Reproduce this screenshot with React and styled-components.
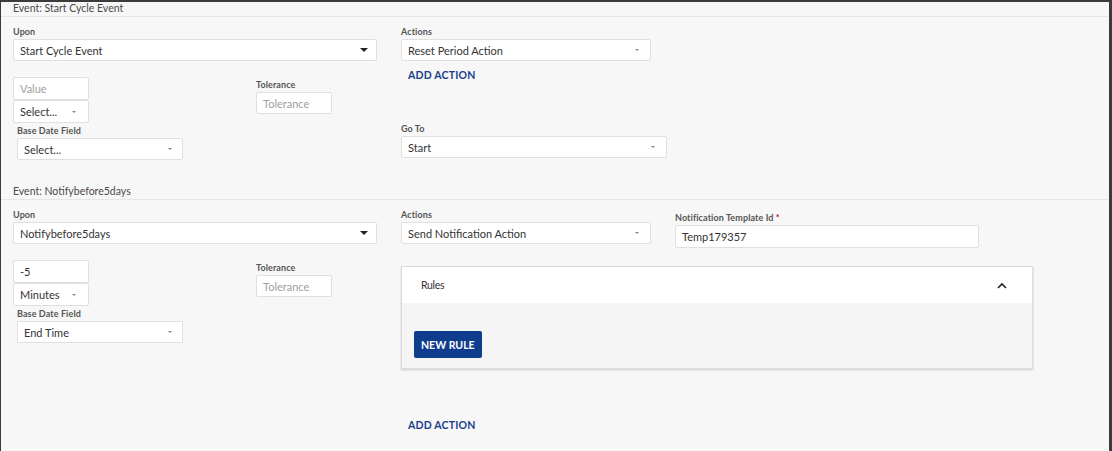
import styled, { createGlobalStyle } from 'styled-components';

const GlobalStyle = createGlobalStyle`
  html, body {
    margin: 0;
    padding: 0;
    background: #3b3b3b;
    font-family: Lato, "Liberation Sans", sans-serif;
  }
  * { box-sizing: border-box; }
`;

const Page = styled.div`
  margin: 2px 3px 0 1px;
  height: 449px;
  background: #f7f7f7;
  overflow: hidden;
`;

// the view is scrolled a little, the first header sits under the top edge
const Scroller = styled.div`
  margin-top: -6px;
`;

const Section = styled.section``;

const SectionHeader = styled.div`
  height: 21px;
  padding: 3px 0 0 12px;
  line-height: 18px;
  font-size: 10.5px;
  color: #4a4a4a;
  border-bottom: 1px solid #e6e6e6;
`;

const SectionBody = styled.div`
  display: flex;
  padding: 8px 0 ${p => p.$bottom || 19}px 12px;
  gap: 24px;
`;

const LeftCol = styled.div`
  width: 364px;
  display: flex;
  flex-direction: column;
`;

const RightCol = styled.div`
  display: flex;
  flex-direction: column;
  align-items: flex-start;
`;

const Field = styled.div`
  display: flex;
  flex-direction: column;
  width: ${p => p.$w ? `${p.$w}px` : 'auto'};
  margin-top: ${p => p.$mt || 0}px;
  margin-left: ${p => p.$ml || 0}px;
`;

const Label = styled.label`
  height: 14px;
  line-height: 14px;
  font-size: 9px;
  font-weight: 700;
  color: #555;
  letter-spacing: 0.1px;
`;

const Req = styled.span`
  color: #d0021b;
`;

const Box = styled.div`
  height: ${p => p.$h || 22}px;
  background: #fff;
  border: 1px solid #e0e0e0;
  border-radius: 2px;
  display: flex;
  align-items: center;
  padding: 0 ${p => p.$pr || 10}px 0 6px;
  font-size: 11px;
  color: ${p => p.$placeholder ? '#a0a0a0' : '#333'};
`;

const BoxText = styled.span`
  flex: 1;
  white-space: nowrap;
`;

const SolidCaret = styled.span`
  width: 0;
  height: 0;
  border-left: 4px solid transparent;
  border-right: 4px solid transparent;
  border-top: 4px solid #222;
`;

const SmallCaret = styled.span`
  width: 0;
  height: 0;
  border-left: 2.5px solid transparent;
  border-right: 2.5px solid transparent;
  border-top: 2.5px solid #888;
`;

const OffsetRow = styled.div`
  display: flex;
  margin-top: 16px;
  gap: 167px;
`;

const Stack = styled.div`
  width: 76px;
  display: flex;
  flex-direction: column;
`;

const LinkButton = styled.button`
  margin-top: ${p => p.$mt || 0}px;
  margin-left: 7px;
  padding: 0;
  height: 14px;
  line-height: 14px;
  border: none;
  background: none;
  font-family: inherit;
  font-size: 10.5px;
  font-weight: 700;
  color: #1a3e8c;
  letter-spacing: 0.2px;
  cursor: pointer;
`;

const FieldRow = styled.div`
  display: flex;
  align-items: flex-start;
  gap: 24px;
`;

const Panel = styled.div`
  margin-top: 18px;
  width: 632px;
  border: 1px solid #dcdcdc;
  box-shadow: 0 1px 2px rgba(0, 0, 0, 0.18);
  background: #f5f5f5;
`;

const PanelHeader = styled.div`
  height: 36px;
  background: #fff;
  display: flex;
  align-items: center;
  justify-content: space-between;
  padding: 0 25px 0 19px;
  font-size: 10.5px;
  color: #333;
  letter-spacing: -0.3px;
`;

const PanelBody = styled.div`
  padding: 28px 12px 10px;
`;

const PrimaryButton = styled.button`
  height: 27px;
  padding: 0 7px;
  border: none;
  border-radius: 2px;
  background: #0f3c8d;
  color: #fff;
  font-family: inherit;
  font-size: 10.5px;
  font-weight: 700;
  cursor: pointer;
`;

const Select = ({ value, placeholder, solid, pr }) => (
  <Box $placeholder={placeholder} $pr={pr}>
    <BoxText>{value}</BoxText>
    {solid ? <SolidCaret /> : <SmallCaret />}
  </Box>
);

const ChevronUp = () => (
  <svg width="10" height="7" viewBox="0 0 10 7">
    <path d="M1 6 L5 2 L9 6" fill="none" stroke="#222" strokeWidth="1.6" />
  </svg>
);

const OffsetFields = ({ value, unit, placeholder }) => (
  <OffsetRow>
    <Stack>
      <Box $h={23} $placeholder={placeholder}>{value}</Box>
      <Box $h={23} $pr={12}>
        <BoxText>{unit}</BoxText>
        <SmallCaret />
      </Box>
    </Stack>
    <Field $w={76} $mt={1}>
      <Label>Tolerance</Label>
      <Box $placeholder>Tolerance</Box>
    </Field>
  </OffsetRow>
);

export default function App() {
  return (
    <>
      <GlobalStyle />
      <Page>
        <Scroller>
          <Section>
            <SectionHeader>Event: Start Cycle Event</SectionHeader>
            <SectionBody>
              <LeftCol>
                <Field>
                  <Label>Upon</Label>
                  <Select value="Start Cycle Event" solid pr={8} />
                </Field>
                <OffsetFields value="Value" unit="Select..." placeholder />
                <Field $w={166} $ml={4} $mt={1}>
                  <Label>Base Date Field</Label>
                  <Select value="Select..." pr={10} />
                </Field>
              </LeftCol>
              <RightCol>
                <Field $w={250}>
                  <Label>Actions</Label>
                  <Select value="Reset Period Action" pr={11} />
                </Field>
                <LinkButton $mt={7}>ADD ACTION</LinkButton>
                <Field $w={266} $mt={40}>
                  <Label>Go To</Label>
                  <Select value="Start" pr={11} />
                </Field>
              </RightCol>
            </SectionBody>
          </Section>

          <Section>
            <SectionHeader>Event: Notifybefore5days</SectionHeader>
            <SectionBody>
              <LeftCol>
                <Field>
                  <Label>Upon</Label>
                  <Select value="Notifybefore5days" solid pr={8} />
                </Field>
                <OffsetFields value="-5" unit="Minutes" />
                <Field $w={166} $ml={4} $mt={1}>
                  <Label>Base Date Field</Label>
                  <Select value="End Time" pr={10} />
                </Field>
              </LeftCol>
              <RightCol>
                <FieldRow>
                  <Field $w={250}>
                    <Label>Actions</Label>
                    <Select value="Send Notification Action" pr={11} />
                  </Field>
                  <Field $w={304} $mt={3}>
                    <Label>Notification Template Id <Req>*</Req></Label>
                    <Box $h={23}>Temp179357</Box>
                  </Field>
                </FieldRow>
                <Panel>
                  <PanelHeader>
                    <span>Rules</span>
                    <ChevronUp />
                  </PanelHeader>
                  <PanelBody>
                    <PrimaryButton>NEW RULE</PrimaryButton>
                  </PanelBody>
                </Panel>
                <LinkButton $mt={49}>ADD ACTION</LinkButton>
              </RightCol>
            </SectionBody>
          </Section>
        </Scroller>
      </Page>
    </>
  );
}
